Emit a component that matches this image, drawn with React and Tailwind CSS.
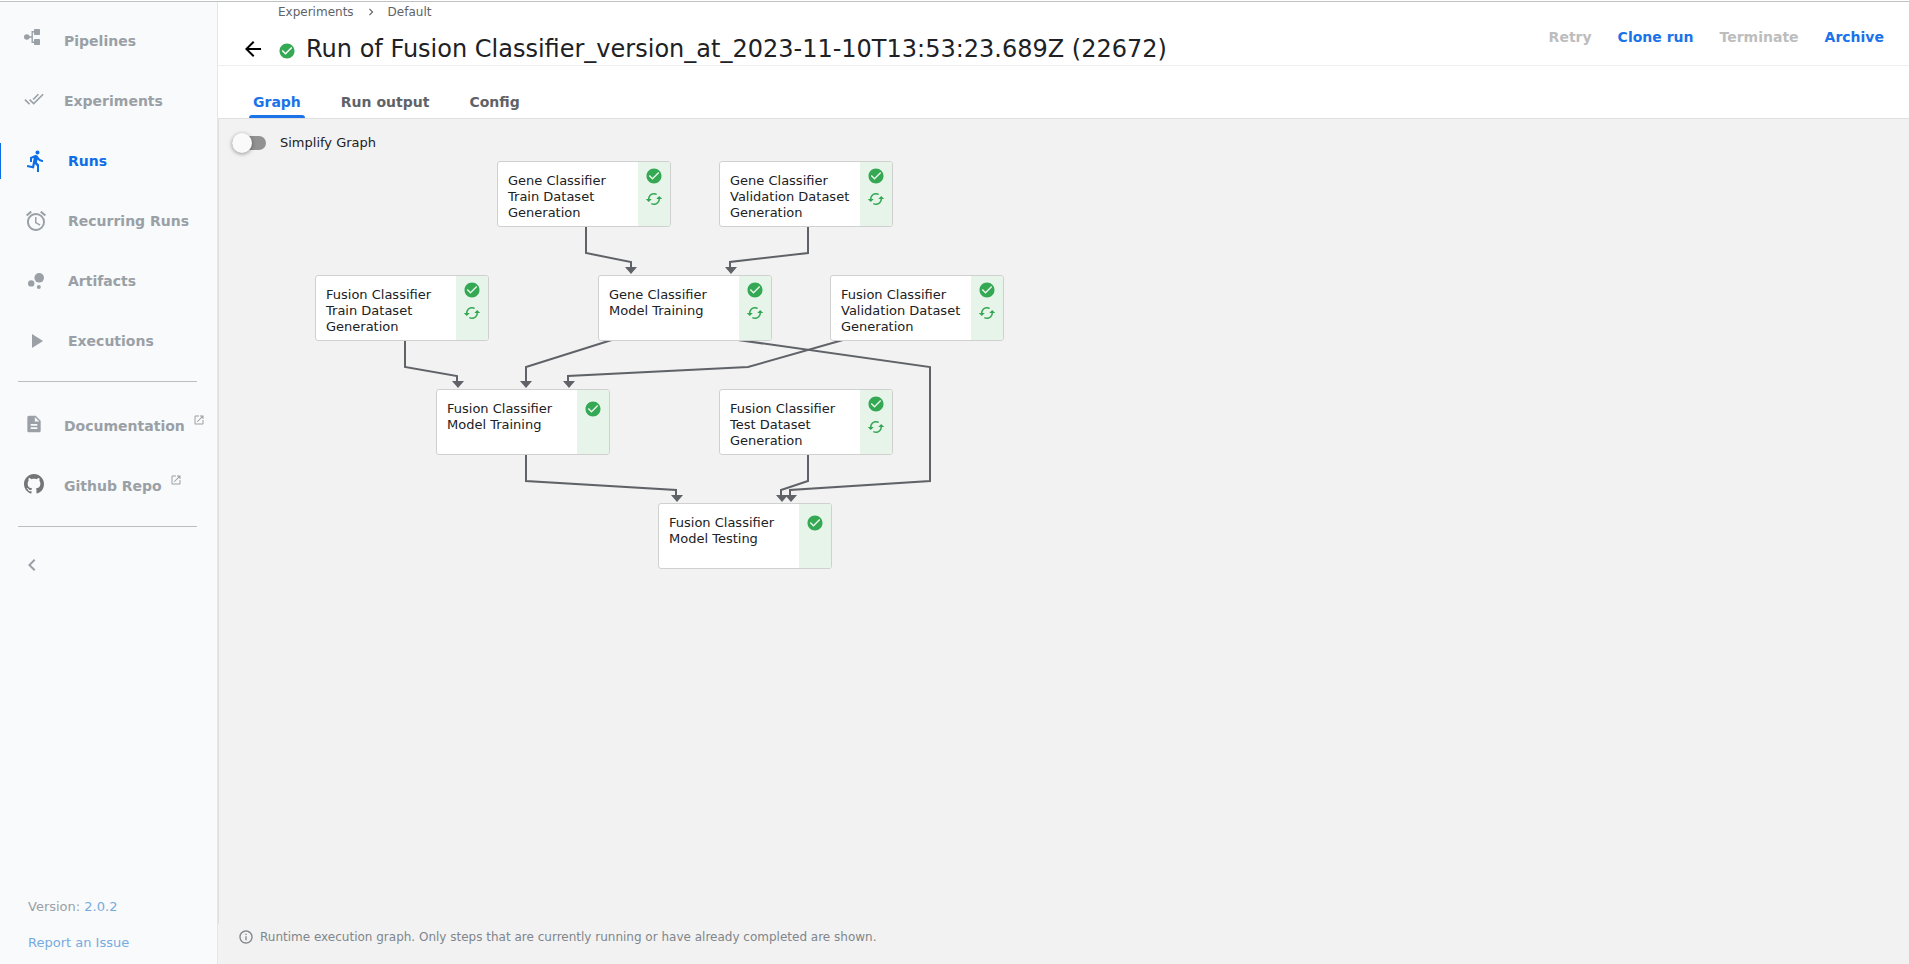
import React from "react";
import {
  MdAlarm,
  MdArrowBack,
  MdBubbleChart,
  MdCached,
  MdCheckCircle,
  MdChevronLeft,
  MdChevronRight,
  MdDescription,
  MdDirectionsRun,
  MdDoneAll,
  MdInfoOutline,
  MdOpenInNew,
  MdPlayArrow,
} from "react-icons/md";

function PipelinesIcon({ className }) {
  return (
    <svg viewBox="0 0 20 20" className={className} fill="currentColor" aria-hidden="true">
      <circle cx="2.8" cy="10" r="2.8" />
      <rect x="10" y="2" width="6" height="6" rx="0.8" />
      <rect x="10" y="12" width="6" height="6" rx="0.8" />
      <path d="M5 10H8M11 4.8H8.2V15.2H11" fill="none" stroke="currentColor" strokeWidth="1.4" />
    </svg>
  );
}

function GithubIcon({ className }) {
  return (
    <svg viewBox="0 0 16 16" className={className} fill="currentColor" aria-hidden="true">
      <path d="M8 0C3.58 0 0 3.58 0 8c0 3.54 2.29 6.53 5.47 7.59.4.07.55-.17.55-.38 0-.19-.01-.82-.01-1.49-2.01.37-2.53-.49-2.69-.94-.09-.23-.48-.94-.82-1.13-.28-.15-.68-.52-.01-.53.63-.01 1.08.58 1.23.82.72 1.21 1.87.87 2.33.66.07-.52.28-.87.51-1.07-1.78-.2-3.64-.89-3.64-3.95 0-.87.31-1.59.82-2.15-.08-.2-.36-1.02.08-2.12 0 0 .67-.21 2.2.82.64-.18 1.32-.27 2-.27s1.36.09 2 .27c1.53-1.04 2.2-.82 2.2-.82.44 1.1.16 1.92.08 2.12.51.56.82 1.27.82 2.15 0 3.07-1.87 3.75-3.65 3.95.29.25.54.73.54 1.48 0 1.07-.01 1.93-.01 2.2 0 .21.15.46.55.38A8.01 8.01 0 0 0 16 8c0-4.42-3.58-8-8-8z" />
    </svg>
  );
}

const navItems = [
  { label: "Pipelines", Icon: PipelinesIcon, icon: "size-5 mb-2" },
  { label: "Experiments", Icon: MdDoneAll, icon: "size-5 mb-1" },
  { label: "Runs", Icon: MdDirectionsRun, icon: "size-6", active: true },
  { label: "Recurring Runs", Icon: MdAlarm, icon: "size-6" },
  { label: "Artifacts", Icon: MdBubbleChart, icon: "size-6" },
  { label: "Executions", Icon: MdPlayArrow, icon: "size-6" },
];

const externalItems = [
  { label: "Documentation", Icon: MdDescription, icon: "size-5 mb-1" },
  { label: "Github Repo", Icon: GithubIcon, icon: "size-5 mb-1 text-[#757575]" },
];

function NavLink({ label, Icon, icon, active, external }) {
  return (
    <a
      href="#"
      className={
        "flex h-15 items-center gap-5 whitespace-nowrap pl-6 text-sm font-bold " +
        (active ? "text-[#0d6de7]" : "text-[#9aa0a6]")
      }
    >
      <Icon className={icon + " shrink-0"} />
      <span>{label}</span>
      {external && <MdOpenInNew className="-ml-3 mb-3 size-3 shrink-0" />}
    </a>
  );
}

function Sidebar() {
  return (
    <aside className="flex w-[218px] shrink-0 flex-col border-r border-[#e4e6e8] bg-[#f8fafb]">
      <nav className="flex flex-col pt-[9px]">
        {navItems.map((item) => (
          <div
            key={item.label}
            className={item.active ? "relative before:absolute before:left-0 before:top-3 before:h-9 before:w-px before:bg-[#0d6de7]" : ""}
          >
            <NavLink {...item} />
          </div>
        ))}
        <hr className="ml-[18px] mb-3.5 mt-2.5 mr-5 border-[#bdbdbd]" />
        {externalItems.map((item) => (
          <NavLink key={item.label} {...item} external />
        ))}
        <hr className="ml-[18px] mt-2.5 mr-5 border-[#bdbdbd]" />
      </nav>
      <button type="button" aria-label="Collapse" className="ml-5 mt-[26px] flex size-6 items-center justify-center text-[#9aa0a6]">
        <MdChevronLeft className="size-6" />
      </button>
      <div className="mt-auto flex flex-col gap-4 pb-[11px] pl-7 text-[13px] leading-5 text-[#9aa0a6]">
        <div>
          Version: <a href="#" className="text-[#77abde]">2.0.2</a>
        </div>
        <a href="#" className="text-[#77abde]">Report an Issue</a>
      </div>
    </aside>
  );
}

function Header() {
  return (
    <header className="flex h-16 shrink-0 items-start justify-between border-b border-[#eeeeee]">
      <div className="flex flex-col">
        <nav aria-label="Breadcrumb" className="flex h-5 items-center gap-2.5 pl-15 text-xs text-[#5f6368]">
          <a href="#">Experiments</a>
          <MdChevronRight className="size-3.5" />
          <a href="#">Default</a>
        </nav>
        <div className="flex items-center pl-[23px] pt-[11px]">
          <button type="button" aria-label="Back" className="text-black">
            <MdArrowBack className="size-6" />
          </button>
          <MdCheckCircle className="ml-[13px] mt-1 size-[18px] text-[#34a853]" />
          <h1 className="ml-2.5 whitespace-nowrap text-2xl leading-8 text-[#202124]">
            Run of Fusion Classifier_version_at_2023-11-10T13:53:23.689Z (22672)
          </h1>
        </div>
      </div>
      <div className="flex gap-[26px] pr-[25px] pt-[25px] text-sm font-bold text-[#1a73e8]">
        <button type="button" disabled className="text-[#bdbdbd]">Retry</button>
        <button type="button">Clone run</button>
        <button type="button" disabled className="text-[#bdbdbd]">Terminate</button>
        <button type="button">Archive</button>
      </div>
    </header>
  );
}

function Tabs() {
  return (
    <div role="tablist" className="flex h-[53px] shrink-0 items-end gap-8 border-b border-[#e0e0e0] pl-[31px] text-sm font-bold text-[#5f6368]">
      <button type="button" role="tab" aria-selected="true" className="flex h-8 flex-col items-center justify-between text-[#1a73e8]">
        <span className="px-1 pt-1.5">Graph</span>
        <span className="h-[3px] w-full rounded-t bg-[#1a73e8]" />
      </button>
      <button type="button" role="tab" aria-selected="false" className="h-8 px-1">Run output</button>
      <button type="button" role="tab" aria-selected="false" className="h-8 px-1">Config</button>
    </div>
  );
}

const nodes = [
  { x: 278, y: 42, text: "Gene Classifier Train Dataset Generation", cached: true },
  { x: 500, y: 42, text: "Gene Classifier Validation Dataset Generation", cached: true },
  { x: 96, y: 156, text: "Fusion Classifier Train Dataset Generation", cached: true },
  { x: 379, y: 156, text: "Gene Classifier Model Training", cached: true },
  { x: 611, y: 156, text: "Fusion Classifier Validation Dataset Generation", cached: true },
  { x: 217, y: 270, text: "Fusion Classifier Model Training" },
  { x: 500, y: 270, text: "Fusion Classifier Test Dataset Generation", cached: true },
  { x: 439, y: 384, text: "Fusion Classifier Model Testing" },
];

const edges = [
  "367,107 367,134 412,143 412,149",
  "589,107 589,134 511,143 511,149",
  "186,221 186,248 238,257 238,263",
  "399,219 307,248 307,263",
  "631,219 529,248 349,257 349,263",
  "505,219 711,248 711,362 571,371 571,377",
  "589,335 589,362 562,371 562,377",
  "307,335 307,362 457,371 457,377",
];

const arrowheads = [
  [412, 148],
  [512, 148],
  [239, 262],
  [307, 262],
  [350, 262],
  [572, 376],
  [563, 376],
  [458, 376],
];

function GraphNode({ x, y, text, cached }) {
  return (
    <button
      type="button"
      style={{ left: x, top: y }}
      className="absolute flex h-[66px] w-[174px] overflow-hidden rounded-[3px] border border-[#d0d0d0] bg-white text-left text-[13px] leading-4 text-[#202124]"
    >
      <span className="w-[140px] self-start pl-2.5 pt-[11px]">{text}</span>
      <span
        className={
          "flex w-8 flex-col items-center gap-[5px] self-stretch bg-[#e6f4ea] text-[#34a853] " +
          (cached ? "pt-[5px]" : "pt-2.5")
        }
      >
        <MdCheckCircle className="size-[18px]" />
        {cached && <MdCached className="size-[18px]" />}
      </span>
    </button>
  );
}

function Graph() {
  return (
    <div className="relative min-h-[480px] flex-1 border-l border-[#e0e0e0]">
      <svg width="800" height="460" className="absolute left-0 top-0" aria-hidden="true">
        {edges.map((points) => (
          <polyline key={points} points={points} fill="none" stroke="#5f6368" strokeWidth="2" />
        ))}
        {arrowheads.map(([x, y]) => (
          <path key={x} d={`M${x - 6} ${y}h12l-6 7z`} fill="#5f6368" />
        ))}
      </svg>
      {nodes.map((node) => (
        <GraphNode key={node.x + "-" + node.y} {...node} />
      ))}
      <label className="inline-flex items-center gap-3 pl-[13px] pt-3 text-[13px] leading-6 text-[#202124]">
        <span className="relative flex w-9 items-center">
          <input type="checkbox" role="switch" className="h-3.5 w-[34px] appearance-none rounded-full bg-[#929292]" />
          <span className="absolute left-0 size-5 rounded-full bg-[#fafafa] shadow-[0_1px_4px_rgba(0,0,0,0.4)]" />
        </span>
        <span>Simplify Graph</span>
      </label>
    </div>
  );
}

export default function App() {
  return (
    <div className="flex h-screen flex-col bg-white font-['DejaVu_Sans','Liberation_Sans',sans-serif]">
      <div className="h-0.5 shrink-0 border-b border-[#bfc1c3]" />
      <div className="flex min-h-0 flex-1">
        <Sidebar />
        <main className="flex min-w-0 flex-1 flex-col">
          <Header />
          <Tabs />
          <section className="flex min-h-0 flex-1 flex-col bg-[#f2f2f2]">
            <Graph />
            <footer className="flex h-10 shrink-0 items-start gap-1.5 pl-5 pt-[3px] text-xs leading-5 text-[#80868b]">
              <MdInfoOutline className="mt-0.5 size-4" />
              <span>Runtime execution graph. Only steps that are currently running or have already completed are shown.</span>
            </footer>
          </section>
        </main>
      </div>
    </div>
  );
}
